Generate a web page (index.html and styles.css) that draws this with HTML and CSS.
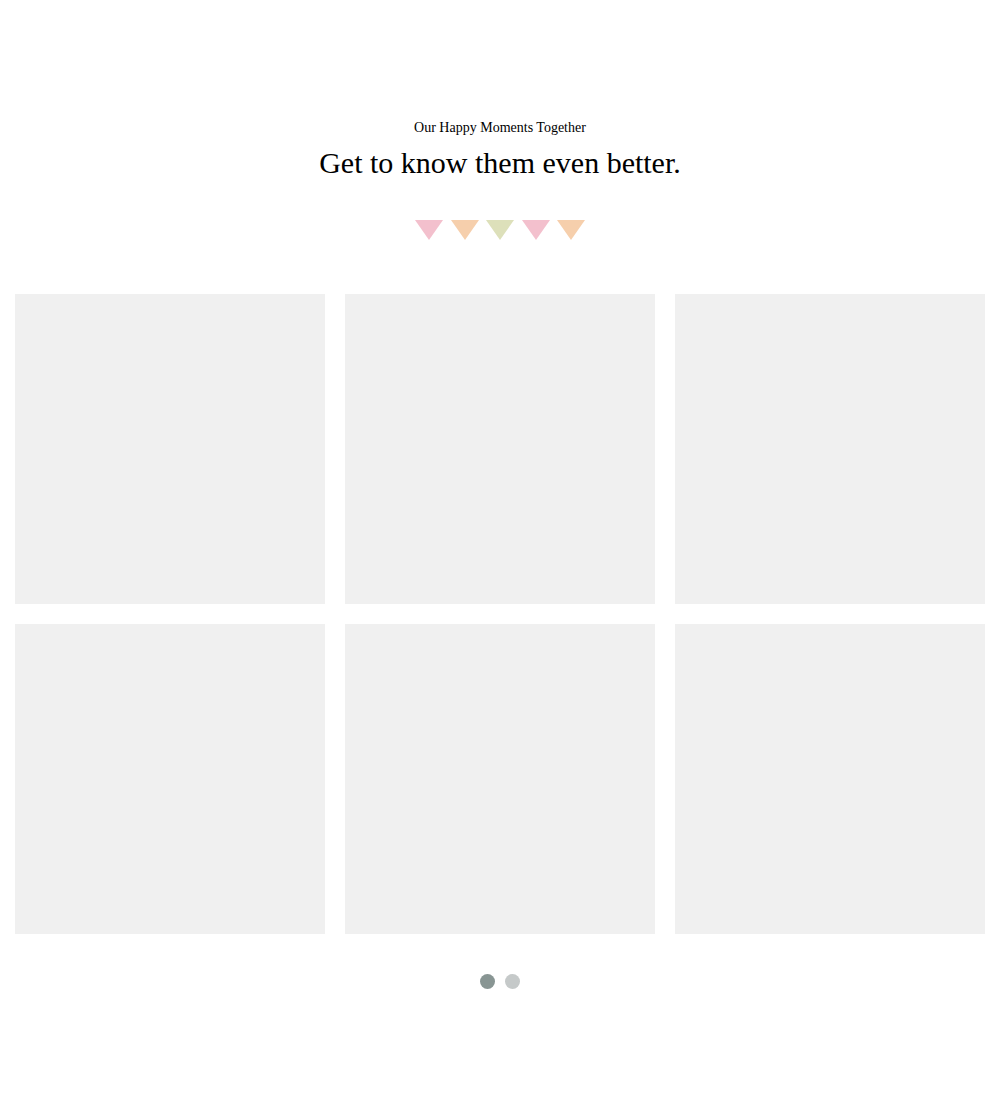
FILE: index.html
```html
<!DOCTYPE html>
<html>
<head>
<meta charset="utf-8">
<link rel="stylesheet" href="styles.css">
</head>
<body>
<section class="moments">
  <header class="heading">
    <p class="eyebrow">Our Happy Moments Together</p>
    <h1 class="title">Get to know them even better.</h1>
  </header>
  <div class="bunting">
    <span class="flag pink"></span>
    <span class="flag peach"></span>
    <span class="flag green"></span>
    <span class="flag pink"></span>
    <span class="flag peach"></span>
  </div>
  <div class="gallery">
    <div class="tile"></div>
    <div class="tile"></div>
    <div class="tile"></div>
    <div class="tile"></div>
    <div class="tile"></div>
    <div class="tile"></div>
  </div>
  <div class="dots">
    <span class="dot active"></span>
    <span class="dot"></span>
  </div>
</section>
</body>
</html>
```
FILE: styles.css
```css
html, body {
  margin: 0;
  padding: 0;
  background: #fff;
}
body {
  font-family: "Liberation Serif", "Times New Roman", serif;
  color: #000;
}
.moments {
  padding-top: 119px;
  padding-bottom: 120px;
}
.heading {
  text-align: center;
}
.eyebrow {
  margin: 0;
  font-size: 14px;
  line-height: 18px;
}
.title {
  margin: 7px 0 0;
  font-size: 30px;
  font-weight: normal;
  line-height: 38px;
}
.bunting {
  display: flex;
  justify-content: center;
  gap: 7.5px;
  margin-top: 38px;
}
.flag {
  width: 0;
  height: 0;
  border-left: 14px solid transparent;
  border-right: 14px solid transparent;
  border-top: 20px solid #f2bfcc;
}
.flag.pink { border-top-color: #f3c0cd; }
.flag.peach { border-top-color: #f6cfac; }
.flag.green { border-top-color: #dde0ba; }
.gallery {
  display: grid;
  grid-template-columns: repeat(3, 310px);
  grid-auto-rows: 310px;
  gap: 20px;
  justify-content: center;
  margin-top: 54px;
}
.tile {
  background: #f0f0f0;
}
.dots {
  display: flex;
  justify-content: center;
  gap: 10px;
  margin-top: 40px;
}
.dot {
  width: 15px;
  height: 15px;
  border-radius: 50%;
  background: #c5c9c9;
}
.dot.active {
  background: #889593;
}
```
